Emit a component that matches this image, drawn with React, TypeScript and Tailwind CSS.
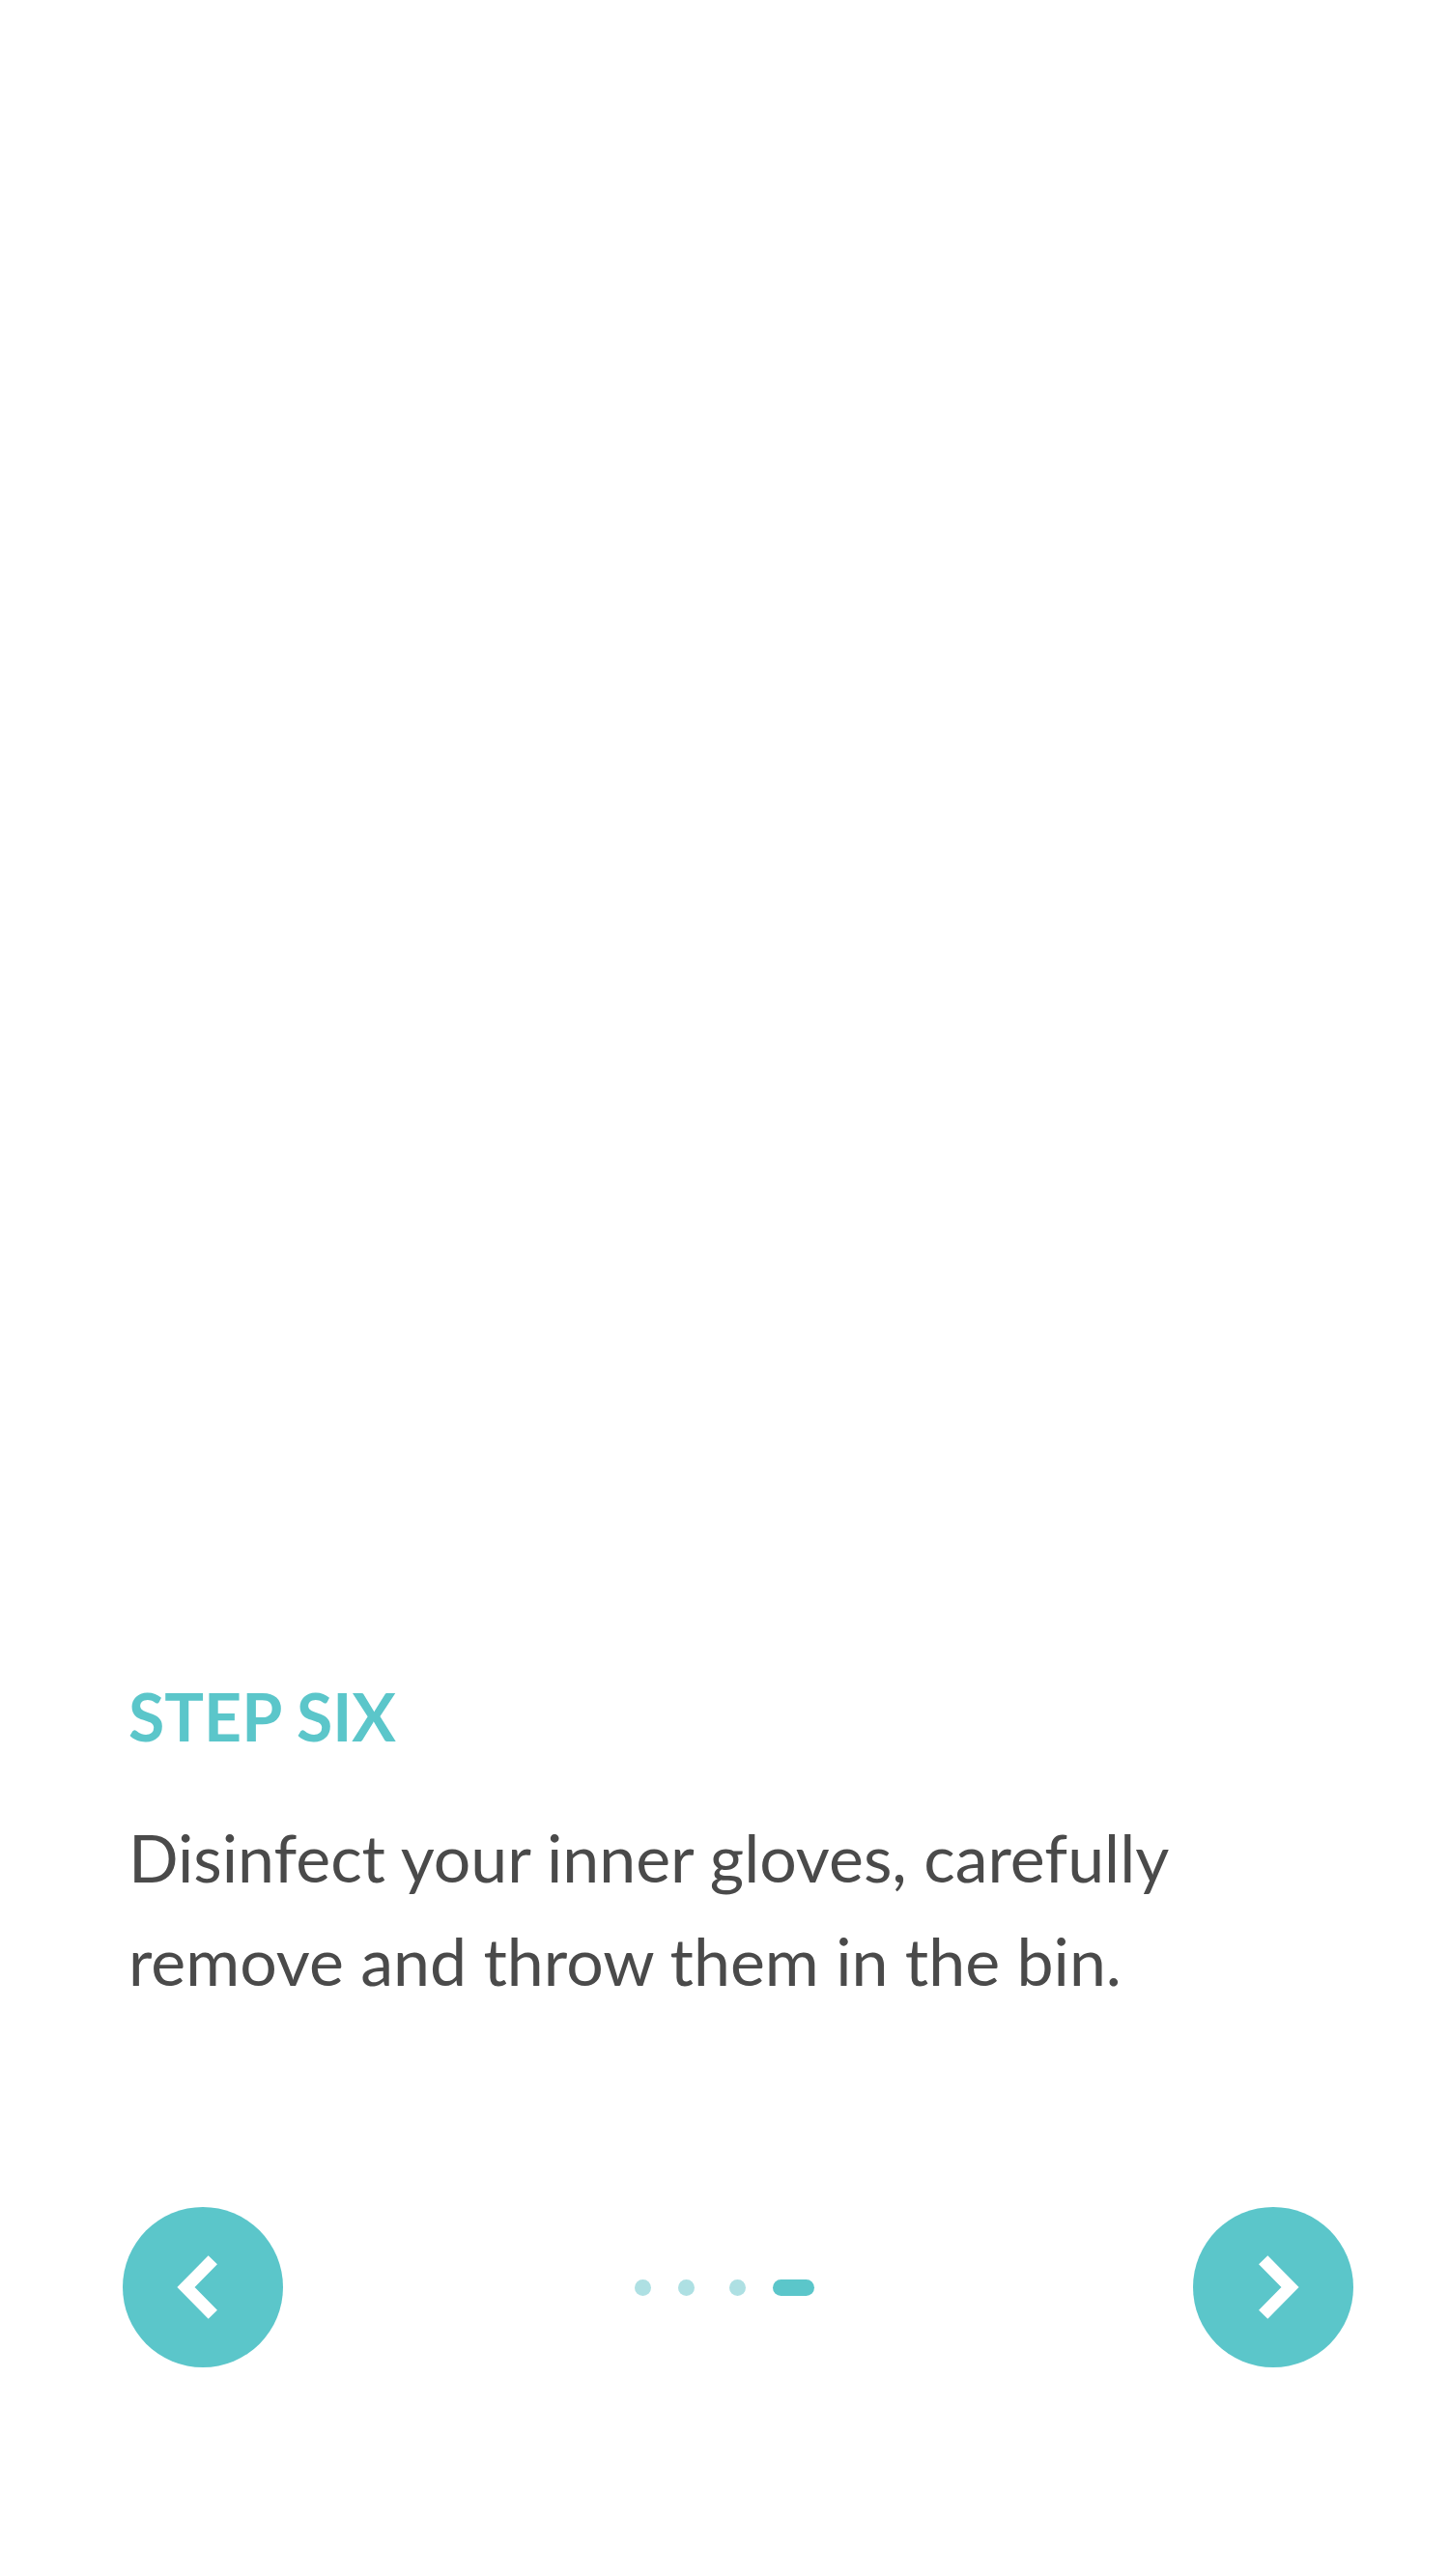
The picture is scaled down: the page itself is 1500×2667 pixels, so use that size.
import React from 'react';

const teal = 'bg-[#5bc6ca]';

function Chevron({ dir }: { dir: 'left' | 'right' }) {
  const pts = dir === 'left' ? '93.3,54.7 65.5,83 93.3,111.3' : '72.7,54.7 100.5,83 72.7,111.3';
  return (
    <svg width="166" height="166" viewBox="0 0 166 166" className="block">
      <polyline points={pts} fill="none" stroke="#fff" strokeWidth="13" strokeLinecap="butt" strokeLinejoin="miter" />
    </svg>
  );
}

function NavButton({ dir }: { dir: 'left' | 'right' }) {
  return (
    <button
      aria-label={dir === 'left' ? 'Previous step' : 'Next step'}
      className={`w-[166px] h-[166px] rounded-full ${teal} flex items-center justify-center`}
    >
      <Chevron dir={dir} />
    </button>
  );
}

export default function App() {
  return (
    <div
      className="w-[1500px] h-[2667px] bg-white flex flex-col pb-[216px]"
      style={{ fontFamily: 'Lato, "Open Sans", sans-serif' }}
    >
      {/* illustration area, blank in this step */}
      <div className="flex-1" />

      <div className="pl-[133px] pr-[133px]">
        <h2 className="text-[68px] leading-[68px] font-bold text-[#5bc6ca]">STEP SIX</h2>
        <p className="mt-[58px] text-[68px] leading-[107px] text-[#4a4a4a]">
          Disinfect your inner gloves, carefully remove and throw them in the bin.
        </p>
      </div>

      <div className="mt-[202px] grid grid-cols-[1fr_auto_1fr] items-center">
        <div className="pl-[127px]">
          <NavButton dir="left" />
        </div>
        <div className="flex items-center">
          <span className="w-[17px] h-[17px] rounded-full bg-[#aee0e3]" />
          <span className="ml-[28px] w-[17px] h-[17px] rounded-full bg-[#aee0e3]" />
          <span className="ml-[36px] w-[17px] h-[17px] rounded-full bg-[#aee0e3]" />
          <span className="ml-[28px] w-[43px] h-[17px] rounded-full bg-[#5bc6ca]" />
        </div>
        <div className="pr-[99px] flex justify-end">
          <NavButton dir="right" />
        </div>
      </div>
    </div>
  );
}
